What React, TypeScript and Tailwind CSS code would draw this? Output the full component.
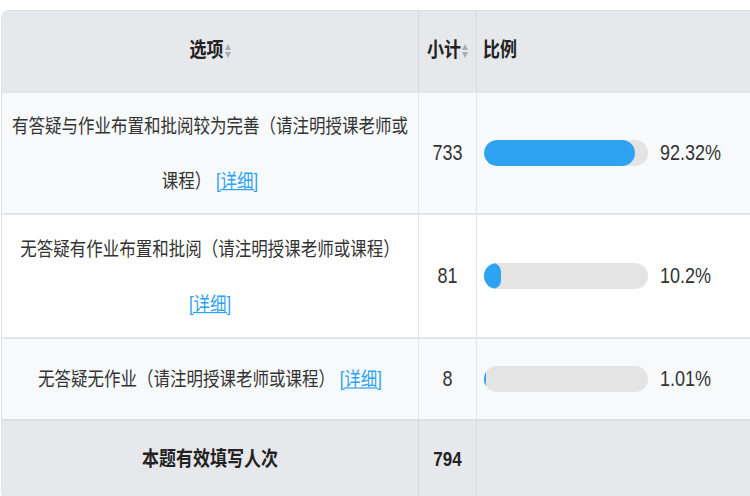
const rows = [
  { label: "有答疑与作业布置和批阅较为完善（请注明授课老师或课程）", count: 733, pct: 92.32, h: "h-[122px]", bg: "bg-[#f8f9fb]" },
  { label: "无答疑有作业布置和批阅（请注明授课老师或课程）", count: 81, pct: 10.2, h: "h-[124px]", bg: "bg-white" },
  { label: "无答疑无作业（请注明授课老师或课程）", count: 8, pct: 1.01, h: "h-[82px]", bg: "bg-[#f8f9fb]" },
];

function SortIcon() {
  return (
    <svg width="6" height="16" viewBox="0 0 6 16" className="ml-[1px]">
      <path d="M3 1 L6 7 H0 Z" fill="#a9adb3" />
      <path d="M3 15 L6 9 H0 Z" fill="#a9adb3" />
    </svg>
  );
}

export default function App() {
  return (
    <div
      className="w-[750px] h-[496px] overflow-hidden bg-white pt-[10px] pl-[1px] text-[#333]"
      style={{ fontFamily: '"Liberation Sans", "Noto Sans CJK SC", sans-serif' }}
    >
      <div className="w-[780px] rounded-tl-lg rounded-bl-lg overflow-hidden border border-[#dfe1e5]">
        <div className="grid grid-cols-[417px_58px_1fr] h-[80px] bg-[#e6e8ec] text-[17px] font-bold text-[#222]">
          <div className="flex items-center justify-center border-r border-[#d8dade]"><span className="scale-y-[1.2]">选项</span><SortIcon /></div>
          <div className="flex items-center justify-center border-r border-[#d8dade]"><span className="scale-y-[1.2]">小计</span><SortIcon /></div>
          <div className="flex items-center pl-[6px]"><span className="scale-y-[1.2]">比例</span></div>
        </div>
        {rows.map((r) => (
          <div key={r.count} className={`grid grid-cols-[417px_58px_1fr] ${r.h} ${r.bg} border-t-2 border-[#e3e5e8] text-[16.5px]`}>
            <div className="flex items-center justify-center px-[6px] text-center leading-[46px] border-r border-[#e3e5e8]">
              <p className="scale-y-[1.2]">
                {r.label} <a className="text-[#2ea3f2] underline">[详细]</a>
              </p>
            </div>
            <div className="flex items-center justify-center border-r border-[#e3e5e8] text-[18px]"><span className="scale-y-[1.2]">{r.count}</span></div>
            <div className="flex items-center pl-[7px] text-[18px]">
              <div className="w-[164px] h-[26px] rounded-full bg-[#e4e4e4] overflow-hidden">
                <div className="h-full rounded-full bg-[#2ea3f2]" style={{ width: `${Math.max(r.pct, 1)}%` }} />
              </div>
              <span className="ml-[12px] scale-y-[1.2]">{r.pct}%</span>
            </div>
          </div>
        ))}
        <div className="grid grid-cols-[417px_58px_1fr] h-[80px] bg-[#e6e8ec] border-t-2 border-[#dcdee2] text-[17px] font-bold text-[#222]">
          <div className="flex items-center justify-center border-r border-[#d8dade]"><span className="scale-y-[1.2]">本题有效填写人次</span></div>
          <div className="flex items-center justify-center border-r border-[#d8dade]"><span className="scale-y-[1.2]">794</span></div>
          <div />
        </div>
      </div>
    </div>
  );
}
